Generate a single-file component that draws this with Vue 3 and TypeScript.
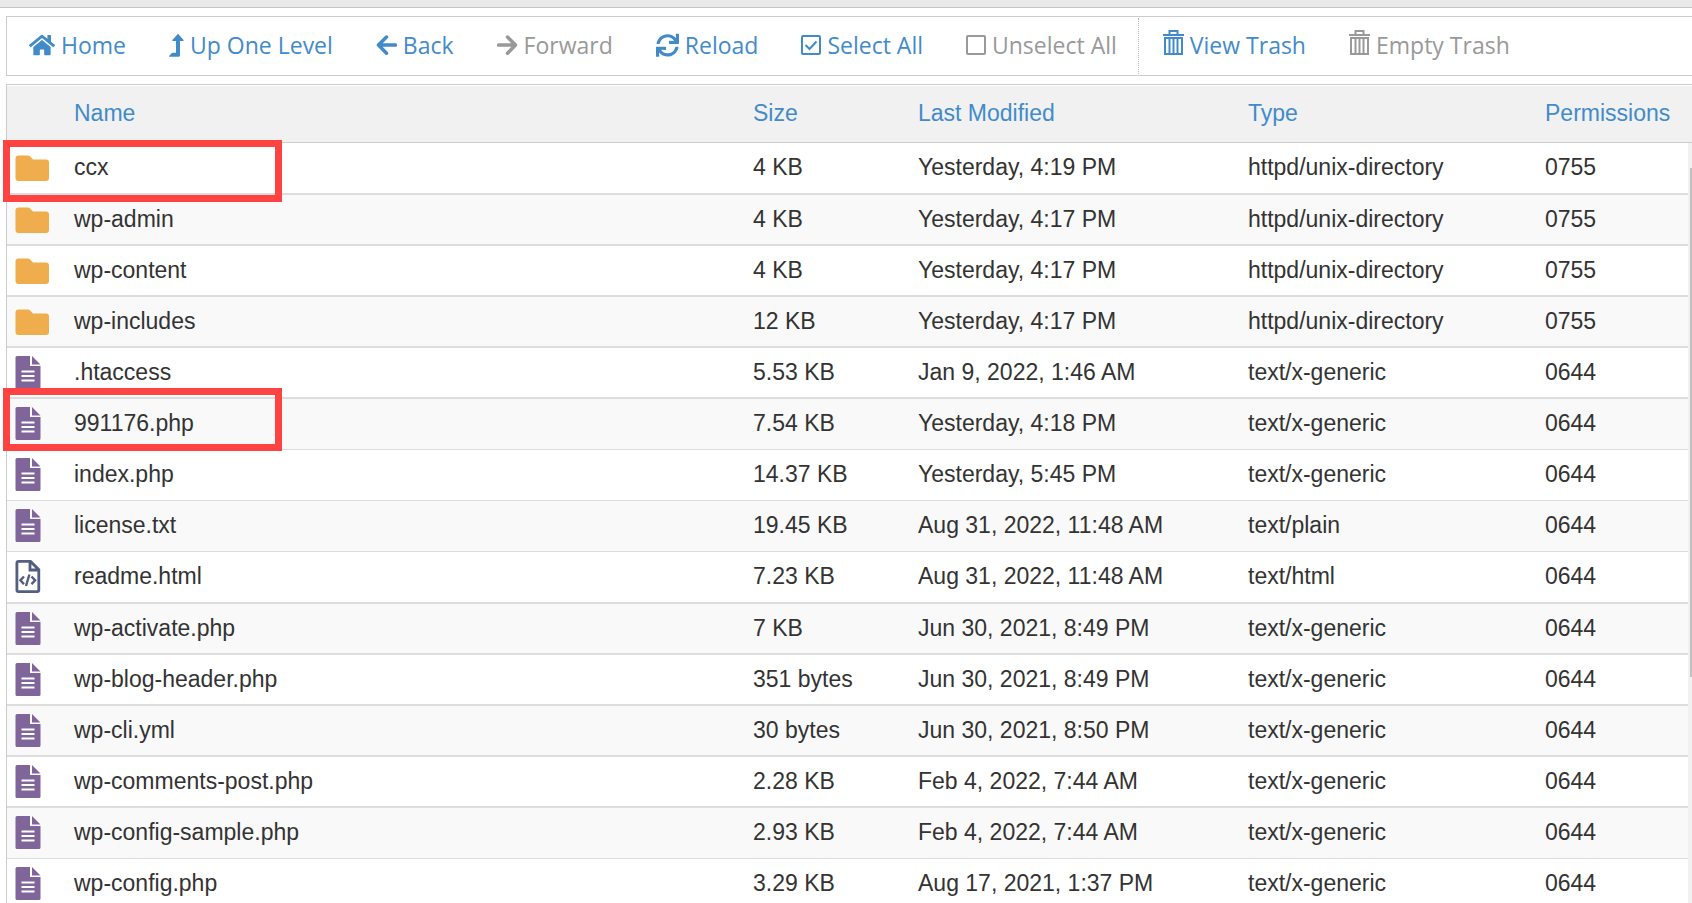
<script setup lang="ts">
interface Tool { label: string; icon: string; disabled?: boolean; divider?: boolean }
interface FileRow { name: string; size: string; modified: string; type: string; perms: string; icon: 'folder' | 'file' | 'code' }

const tools: Tool[] = [
  { label: 'Home', icon: 'home' },
  { label: 'Up One Level', icon: 'up' },
  { label: 'Back', icon: 'back' },
  { label: 'Forward', icon: 'forward', disabled: true },
  { label: 'Reload', icon: 'reload' },
  { label: 'Select All', icon: 'check' },
  { label: 'Unselect All', icon: 'uncheck', disabled: true, divider: true },
  { label: 'View Trash', icon: 'trash' },
  { label: 'Empty Trash', icon: 'trash', disabled: true },
]

const columns: string[] = ['Name', 'Size', 'Last Modified', 'Type', 'Permissions']

function row(name: string, size: string, modified: string, type: string, perms = '0644', icon: FileRow['icon'] = 'file'): FileRow {
  return { name, size, modified, type, perms, icon }
}

const files: FileRow[] = [
  row('ccx', '4 KB', 'Yesterday, 4:19 PM', 'httpd/unix-directory', '0755', 'folder'),
  row('wp-admin', '4 KB', 'Yesterday, 4:17 PM', 'httpd/unix-directory', '0755', 'folder'),
  row('wp-content', '4 KB', 'Yesterday, 4:17 PM', 'httpd/unix-directory', '0755', 'folder'),
  row('wp-includes', '12 KB', 'Yesterday, 4:17 PM', 'httpd/unix-directory', '0755', 'folder'),
  row('.htaccess', '5.53 KB', 'Jan 9, 2022, 1:46 AM', 'text/x-generic'),
  row('991176.php', '7.54 KB', 'Yesterday, 4:18 PM', 'text/x-generic'),
  row('index.php', '14.37 KB', 'Yesterday, 5:45 PM', 'text/x-generic'),
  row('license.txt', '19.45 KB', 'Aug 31, 2022, 11:48 AM', 'text/plain'),
  row('readme.html', '7.23 KB', 'Aug 31, 2022, 11:48 AM', 'text/html', '0644', 'code'),
  row('wp-activate.php', '7 KB', 'Jun 30, 2021, 8:49 PM', 'text/x-generic'),
  row('wp-blog-header.php', '351 bytes', 'Jun 30, 2021, 8:49 PM', 'text/x-generic'),
  row('wp-cli.yml', '30 bytes', 'Jun 30, 2021, 8:50 PM', 'text/x-generic'),
  row('wp-comments-post.php', '2.28 KB', 'Feb 4, 2022, 7:44 AM', 'text/x-generic'),
  row('wp-config-sample.php', '2.93 KB', 'Feb 4, 2022, 7:44 AM', 'text/x-generic'),
  row('wp-config.php', '3.29 KB', 'Aug 17, 2021, 1:37 PM', 'text/x-generic'),
]
</script>

<template>
  <div class="page">
    <div class="strip"></div>
    <nav class="toolbar" aria-label="File actions">
      <button v-for="tool in tools" :key="tool.label" type="button" class="tool" :class="{ divider: tool.divider }" :disabled="tool.disabled">
        <svg v-if="tool.icon === 'home'" width="26" height="28" viewBox="0 0 26 28" aria-hidden="true">
          <path transform="translate(0 3.5) scale(.0451)" d="M280.37 148.26L96 300.11V464a16 16 0 0 0 16 16l112.06-.29a16 16 0 0 0 15.92-16V368a16 16 0 0 1 16-16h64a16 16 0 0 1 16 16v95.64a16 16 0 0 0 16 16.05L464 480a16 16 0 0 0 16-16V300L295.67 148.26a12.19 12.19 0 0 0-15.3 0zM571.6 251.47L488 182.56V44.05a12 12 0 0 0-12-12h-56a12 12 0 0 0-12 12v72.61L318.47 43a48 48 0 0 0-61 0L4.34 251.47a12 12 0 0 0-1.6 16.9l25.5 31A12 12 0 0 0 45.15 301l235.22-193.74a12.19 12.19 0 0 1 15.3 0L530.9 301a12 12 0 0 0 16.9-1.6l25.5-31a12 12 0 0 0-1.7-16.93z" />
        </svg>
        <svg v-else-if="tool.icon === 'up'" width="15" height="28" viewBox="0 0 15 28" aria-hidden="true">
          <path d="M9 3.8 14.6 10q.5 1-.6 1h-3v14.300q0 1.500-1.500 1.500H.6q-1 0-.3-1L2.600 23.300q.4-.5 1-.5H7V11H4q-1.100 0-.6-1Z" />
        </svg>
        <svg v-else-if="tool.icon === 'back' || tool.icon === 'forward'" width="21" height="28" viewBox="0 0 21 28" aria-hidden="true">
          <g :class="{ flip: tool.icon === 'forward' }">
            <path class="arrow" d="M10.500 7 2.500 15.100l8 8.100M3 15.100h16.300" />
          </g>
        </svg>
        <svg v-else-if="tool.icon === 'reload'" width="23" height="28" viewBox="0 0 23 28" aria-hidden="true">
          <path transform="translate(0 3.8) scale(.045)" d="M440.65 12.57l4 82.77A247.16 247.16 0 0 0 255.83 8C134.73 8 33.91 94.92 12.29 209.82A12 12 0 0 0 24.09 224h49.05a12 12 0 0 0 11.67-9.26 175.91 175.91 0 0 1 317-56.94l-101.46-4.86a12 12 0 0 0-12.57 12v47.41a12 12 0 0 0 12 12H500a12 12 0 0 0 12-12V12a12 12 0 0 0-12-12h-47.37a12 12 0 0 0-11.98 12.57zM255.83 432a175.61 175.61 0 0 1-146-77.8l101.8 4.87a12 12 0 0 0 12.57-12v-47.4a12 12 0 0 0-12-12H12a12 12 0 0 0-12 12V500a12 12 0 0 0 12 12h47.35a12 12 0 0 0 12-12.6l-4.15-82.57A247.17 247.17 0 0 0 255.83 504c121.11 0 221.93-86.92 243.55-201.82a12 12 0 0 0-11.8-14.18h-49.05a12 12 0 0 0-11.67 9.26A175.86 175.86 0 0 1 255.83 432z" />
        </svg>
        <svg v-else-if="tool.icon === 'check' || tool.icon === 'uncheck'" width="20" height="28" viewBox="0 0 20 28" aria-hidden="true">
          <rect class="line" x="1" y="6" width="18" height="18" rx="1" />
          <path v-if="tool.icon === 'check'" class="line" d="m4.500 15 4 4 7-7.500" />
        </svg>
        <svg v-else width="21" height="28" viewBox="0 0 21 28" aria-hidden="true">
          <path class="line" d="M0 5h21M6.500 4.500V1h8v3.500M2 8h17v16H2ZM6.500 8v16M10.500 8v16M14.500 8v16" />
        </svg>
        <span>{{ tool.label }}</span>
      </button>
    </nav>

    <main class="listing">
      <table>
        <thead>
          <tr>
            <th class="c-icon" aria-label="Kind"></th>
            <th v-for="(col, i) in columns" :key="col" scope="col" :class="'c' + i"><button type="button" class="sort">{{ col }}</button></th>
          </tr>
        </thead>
        <tbody>
          <tr v-for="file in files" :key="file.name">
            <td class="kind">
              <svg v-if="file.icon === 'folder'" width="34" height="26" viewBox="0 0 34 26" aria-hidden="true">
                <path fill="#f0ad4e" d="M3.500.5H13q1 0 1.800.8L18 4.500h13q3 0 3 3V23q0 3-3 3H3.500q-3 0-3-3V3.500q0-3 3-3Z" />
              </svg>
              <svg v-else-if="file.icon === 'file'" width="26" height="33" viewBox="0 0 26 33" aria-hidden="true">
                <path fill="#7f6599" d="M2 0h13v10h10.500v21.500q0 1.500-1.500 1.500H2Q.5 33 .5 31.500v-30Q.5 0 2 0ZM17 0l8.500 8.500H17Z" />
                <path stroke="#fff" stroke-width="2" d="M6.500 15.500h13M6.500 20h13M6.500 24.500h13" />
              </svg>
              <svg v-else class="code" width="26" height="33" viewBox="0 0 26 33" aria-hidden="true">
                <path stroke-width="2.800" d="M3.500 1.400h12l8.300 8.300V30q0 1.600-1.600 1.600H3.500q-1.600 0-1.600-1.600V3q0-1.600 1.600-1.600ZM15 2v8h8.500" />
                <path stroke-width="2.400" d="m9 16.500-3.600 3.800L9 24.100M16.500 16.500l3.600 3.800-3.600 3.800M14.400 14.500 11 26" />
              </svg>
            </td>
            <td>{{ file.name }}</td>
            <td>{{ file.size }}</td>
            <td>{{ file.modified }}</td>
            <td>{{ file.type }}</td>
            <td>{{ file.perms }}</td>
          </tr>
        </tbody>
      </table>
      <div class="scroll"><div class="thumb"></div></div>
      <div class="mark first"></div>
      <div class="mark second"></div>
    </main>
  </div>
</template>

<style>
body { margin: 0; overflow: hidden; background: #fff; }
</style>

<style scoped>
.page { height: 100vh; overflow: hidden; display: flex; flex-direction: column; font-family: "Liberation Sans", Arial, sans-serif; font-size: 23px; color: #333; }
.strip { flex: none; height: 7px; background: #e9e9e9; border-bottom: 1px solid #c4c4c4; }
.toolbar { flex: none; display: flex; height: 58px; margin: 8px 0 8px 6px; border: 1px solid #ccc; border-right: 0; }
.tool { display: flex; align-items: center; gap: 6px; height: 56px; margin: 1px 0; padding: 0 21px 2px 22px; border: 0; background: none; font: 23px/32px "Open Sans", sans-serif; white-space: nowrap; color: #428bca; cursor: pointer; }
.tool:disabled { color: #999; cursor: default; }
.tool svg { flex: none; margin-bottom: 2px; fill: currentColor; }
.divider { border-right: 1px dotted #bbb; }
.divider + .tool { padding-left: 24px; }
.tool .arrow { fill: none; stroke: currentColor; stroke-width: 3.500; stroke-linecap: round; stroke-linejoin: round; }
.flip { transform: translateX(21px) scaleX(-1); }
.tool .line { fill: none; stroke: currentColor; stroke-width: 2; }
.listing { position: relative; flex: 1; min-height: 0; margin-left: 6px; border-top: 1px solid #ccc; border-left: 1px solid #ccc; padding-top: 1px; }
table { width: 100%; table-layout: fixed; border-collapse: separate; border-spacing: 0; }
th, td { box-sizing: border-box; padding: 0; text-align: left; white-space: nowrap; line-height: 26px; vertical-align: top; }
th { height: 57px; padding-top: 14px; background: #f1f1f1; border-bottom: 1px solid #ccc; font-weight: 400; }
.sort { padding: 0; border: 0; background: none; font: inherit; color: #428bca; cursor: pointer; }
.c-icon { width: 67px; }
.c1 { width: 165px; }
.c2 { width: 330px; }
.c3 { width: 297px; }
.c4 { width: 147px; }
td { height: 51px; padding-top: 11px; border-bottom: 2px solid #ddd; }
tr:nth-child(8n + 1) td { height: 52px; }
tr:nth-child(even) td { background: #f9f9f9; }
tr:nth-child(n + 6):nth-child(-n + 8) td, tr:nth-child(14) td { border-bottom-width: 1px; }
td.kind { padding: 8px 0 0 8px; line-height: 0; }
td.kind svg[width="34"] { margin-top: 4px; }
.code { fill: none; stroke: #535f80; }
.scroll { position: absolute; top: 58px; right: 0; bottom: 0; width: 4px; background: #f1f1f1; }
.thumb { width: 2px; height: 509px; margin: 25px 0 0 2px; background: #c1c1c1; }
.mark { position: absolute; left: -4px; box-sizing: border-box; width: 279px; height: 62px; border: 7px solid #ff4242; pointer-events: none; }
.first { top: 55px; }
.second { top: 303px; height: 63px; }
</style>
